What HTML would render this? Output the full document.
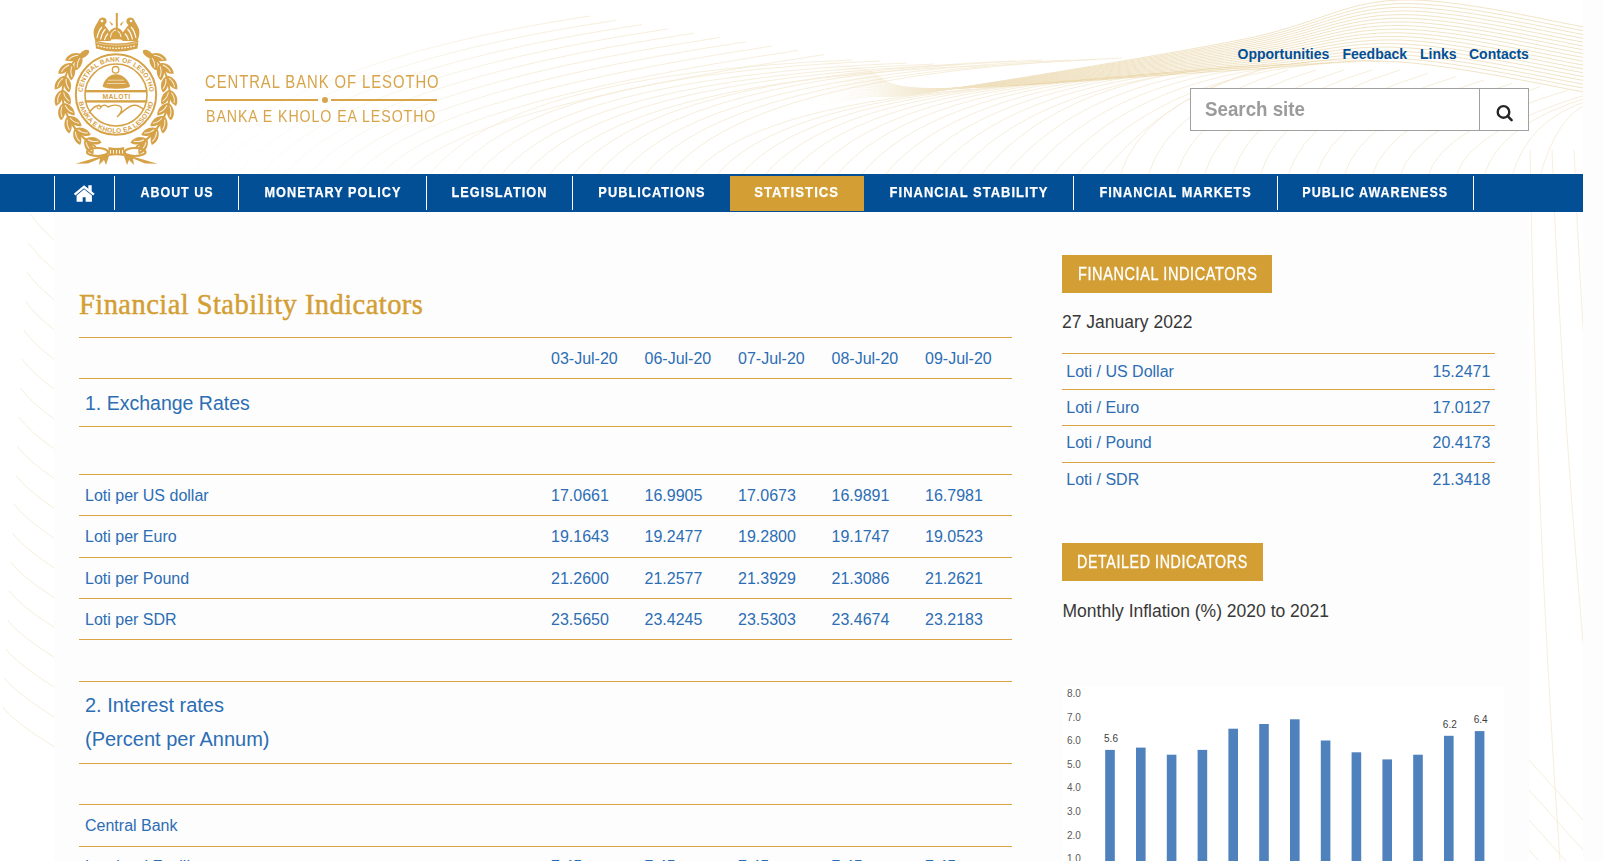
<!DOCTYPE html>
<html><head><meta charset="utf-8">
<style>
*{box-sizing:border-box;margin:0;padding:0}
html,body{width:1603px;height:861px;overflow:hidden;background:#fdfdfd;font-family:"Liberation Sans",sans-serif}
#page{position:absolute;left:0;top:0;width:1583px;height:861px;background:#fff;overflow:hidden}
.abs{position:absolute;white-space:nowrap}
#content{position:absolute;left:54px;top:212px;width:1475px;height:700px;background:#fdfdfd}
#nav{position:absolute;left:0;top:174px;width:1583px;height:38px;background:#034f96}
.sep{position:absolute;top:2px;width:1px;height:34px;background:#fff}
.ni{position:absolute;top:0;height:38px;line-height:36.6px;color:#fff;font-weight:bold;font-size:15px;letter-spacing:1.2px;text-align:center;white-space:nowrap}
.ni span{display:inline-block;transform:scaleX(var(--s,0.85));-webkit-text-stroke:0.25px #fff}
.toplink{position:absolute;top:47px;color:#034f96;font-weight:bold;font-size:14px;line-height:14px;white-space:nowrap}
.ln{position:absolute;left:79px;width:933px;height:1px;background:#d9a441}
.t,.st,.dk{position:absolute;white-space:nowrap;color:#2c6db4;line-height:1}
.st{color:#fff;-webkit-text-stroke:0.35px #fff}
.dk{color:#383838}
</style></head>
<body>
<div id="page">
<svg class="abs" style="left:0;top:0" width="1583" height="861" viewBox="0 0 1583 861">
<defs><linearGradient id="fadeA" gradientUnits="userSpaceOnUse" x1="260" y1="0" x2="560" y2="0"><stop offset="0" stop-color="#fff" stop-opacity="0.25"/><stop offset="1" stop-color="#fff" stop-opacity="1"/></linearGradient><mask id="mA" maskUnits="userSpaceOnUse" x="0" y="0" width="1583" height="861"><rect x="0" y="0" width="1583" height="861" fill="url(#fadeA)"/><rect x="0" y="200" width="1583" height="661" fill="#fff"/></mask></defs>
<g fill="none" stroke="#d8b462" stroke-width="0.8" opacity="0.28" mask="url(#mA)"><path d="M188,176 Q274.7,63.3 590,16.0"/><path d="M212,176 Q294.7,68.5 616,20.3"/><path d="M236,176 Q314.7,73.7 642,24.6"/><path d="M260,176 Q334.7,78.9 668,28.9"/><path d="M284,176 Q354.7,84.1 694,33.2"/><path d="M308,176 Q374.7,89.3 720,37.5"/><path d="M332,176 Q394.7,94.5 746,41.8"/><path d="M356,176 Q414.7,99.7 772,46.1"/><path d="M380,176 Q434.7,104.9 798,50.4"/><path d="M404,176 Q454.7,110.1 824,54.7"/><path d="M428,176 Q506.6,73.8 852,60.0"/><path d="M452,176 Q529.7,75.0 880,61.0"/><path d="M476,176 Q552.0,77.2 907,63.0"/><path d="M500,176 Q575.1,78.4 934,64.0"/><path d="M524,176 Q598.7,79.0 960,64.5"/><path d="M548,176 Q621.8,80.1 987,65.5"/><path d="M572,176 Q649.2,75.6 1015,61.0"/><path d="M596,176 Q673.9,74.7 1042,60.0"/><path d="M620,176 Q697.8,74.9 1070,60.0"/><path d="M644,176 Q722.1,74.5 1096,59.5"/><path d="M668,176 Q747.2,73.0 1122,58.0"/><path d="M692,176 Q745.7,108.8 972,89.2"/><path d="M716,176 Q771.5,106.6 996,87.1"/><path d="M740,176 Q797.3,104.4 1020,85.1"/><path d="M764,176 Q823.1,102.1 1044,83.0"/><path d="M788,176 Q848.9,99.9 1068,80.9"/><path d="M812,176 Q874.7,97.7 1092,78.8"/><path d="M836,176 Q900.5,95.4 1116,76.7"/><path d="M860,176 Q926.2,93.2 1140,74.7"/><path d="M884,176 Q952.0,91.0 1164,72.6"/><path d="M908,176 Q977.8,88.7 1188,70.5"/><path d="M932,176 Q1003.6,86.5 1212,68.4"/><path d="M956,176 Q1029.4,84.3 1236,66.3"/><path d="M980,176 Q1062.8,72.5 1260,65.3"/><path d="M1004,176 Q1087.5,71.6 1284,64.4"/><path d="M1028,176 Q1112.2,70.7 1308,63.5"/><path d="M1052,176 Q1137.0,69.8 1332,62.6"/><path d="M1076,176 Q1161.7,68.9 1356,61.7"/><path d="M1100,176 Q1202.8,47.5 1380,61.3"/><path d="M1120,176 Q1140.0,106.0 1260,70.0"/><path d="M1148,176 Q1168.0,106.0 1288,70.0"/><path d="M1176,176 Q1196.0,106.0 1316,70.0"/><path d="M1204,176 Q1224.0,106.0 1344,70.0"/><path d="M1232,176 Q1252.0,106.0 1372,70.0"/><path d="M1260,176 Q1280.0,106.0 1400,70.0"/><path d="M1288,176 Q1307.0,109.7 1428,73.4"/><path d="M1316,176 Q1333.9,113.4 1456,76.7"/><path d="M1344,176 Q1360.8,117.0 1484,80.1"/><path d="M1372,176 Q1387.8,120.7 1512,83.4"/><path d="M1400,176 Q1414.7,124.4 1540,86.8"/><path d="M1428,176 Q1441.7,128.0 1568,90.2"/><path d="M1456,176 Q1469.2,129.8 1590,93.5"/><path d="M1484,176 Q1498.8,124.2 1590,96.9"/><path d="M1512,176 Q1528.4,118.7 1590,100.2"/><path d="M1540,176 Q1557.9,113.2 1590,103.6"/><path d="M1530,150 Q1536,520 1560,861"/><path d="M1552,150 Q1562,420 1590,720"/><path d="M1574,150 Q1580,300 1592,460"/><path d="M1529,760 L1583,820"/><path d="M1529,790 L1583,850"/><path d="M1529,820 L1583,880"/><path d="M1529,850 L1583,910"/><path d="M30.0,214 Q40.0,228 54,240.0"/><path d="M28.4,243 Q38.4,257 54,269.8"/><path d="M26.8,272 Q36.8,286 54,299.6"/><path d="M25.2,301 Q35.2,315 54,329.4"/><path d="M23.6,330 Q33.6,344 54,359.2"/><path d="M22.0,359 Q32.0,373 54,389.0"/><path d="M20.4,388 Q30.4,402 54,418.8"/><path d="M18.8,417 Q28.8,431 54,448.6"/><path d="M17.2,446 Q27.2,460 54,478.4"/><path d="M15.6,475 Q25.6,489 54,508.2"/><path d="M14.0,504 Q24.0,518 54,538.0"/><path d="M12.4,533 Q22.4,547 54,567.8"/><path d="M10.8,562 Q20.8,576 54,597.6"/><path d="M9.2,591 Q19.2,605 54,627.4"/><path d="M7.6,620 Q17.6,634 54,657.2"/><path d="M6.0,649 Q16.0,663 54,687.0"/><path d="M4.4,678 Q14.4,692 54,716.8"/><path d="M2.8,707 Q12.8,721 54,746.6"/></g>
<defs><linearGradient id="fadeL" gradientUnits="userSpaceOnUse" x1="820" y1="0" x2="960" y2="0"><stop offset="0" stop-color="#fff" stop-opacity="0"/><stop offset="1" stop-color="#fff" stop-opacity="1"/></linearGradient><mask id="mL" maskUnits="userSpaceOnUse" x="0" y="0" width="1583" height="200"><rect x="0" y="0" width="1583" height="200" fill="url(#fadeL)"/></mask></defs>
<g fill="none" stroke="#d8b462" stroke-width="0.9" opacity="0.4" mask="url(#mL)"><path d="M760.0,50.0 C776.7,53.0 830.8,61.6 860.0,68.0 C889.2,74.4 871.7,88.2 935.0,88.5 C998.3,88.8 1162.5,74.4 1240.0,70.0 C1317.5,65.6 1341.7,58.2 1400.0,62.0 C1458.3,65.8 1558.3,87.8 1590.0,93.0"/><path d="M760.0,54.1 C776.7,56.7 830.8,64.0 860.0,69.8 C889.2,75.5 871.7,88.9 935.0,88.7 C998.3,88.4 1162.5,73.3 1240.0,68.2 C1317.5,63.2 1341.7,54.9 1400.0,58.4 C1458.3,61.8 1558.3,84.0 1590.0,89.2"/><path d="M760.0,58.2 C776.7,60.5 830.8,66.4 860.0,71.5 C889.2,76.6 871.7,89.7 935.0,88.9 C998.3,88.0 1162.5,72.2 1240.0,66.5 C1317.5,60.8 1341.7,51.6 1400.0,54.7 C1458.3,57.9 1558.3,80.2 1590.0,85.4"/><path d="M760.0,62.4 C776.7,64.2 830.8,68.8 860.0,73.3 C889.2,77.7 871.7,90.5 935.0,89.0 C998.3,87.6 1162.5,71.0 1240.0,64.7 C1317.5,58.4 1341.7,48.3 1400.0,51.1 C1458.3,53.9 1558.3,76.5 1590.0,81.5"/><path d="M760.0,66.5 C776.7,67.9 830.8,71.3 860.0,75.1 C889.2,78.8 871.7,91.2 935.0,89.2 C998.3,87.2 1162.5,69.9 1240.0,62.9 C1317.5,56.0 1341.7,45.0 1400.0,47.4 C1458.3,49.9 1558.3,72.7 1590.0,77.7"/><path d="M760.0,70.6 C776.7,71.6 830.8,73.7 860.0,76.8 C889.2,80.0 871.7,92.0 935.0,89.4 C998.3,86.8 1162.5,68.8 1240.0,61.2 C1317.5,53.6 1341.7,41.6 1400.0,43.8 C1458.3,45.9 1558.3,68.9 1590.0,73.9"/><path d="M760.0,74.7 C776.7,75.4 830.8,76.1 860.0,78.6 C889.2,81.1 871.7,92.8 935.0,89.6 C998.3,86.4 1162.5,67.7 1240.0,59.4 C1317.5,51.2 1341.7,38.3 1400.0,40.1 C1458.3,41.9 1558.3,65.1 1590.0,70.1"/><path d="M760.0,78.8 C776.7,79.1 830.8,78.5 860.0,80.4 C889.2,82.2 871.7,93.5 935.0,89.7 C998.3,86.0 1162.5,66.5 1240.0,57.6 C1317.5,48.8 1341.7,35.0 1400.0,36.5 C1458.3,37.9 1558.3,61.3 1590.0,66.2"/><path d="M760.0,82.9 C776.7,82.8 830.8,81.0 860.0,82.1 C889.2,83.3 871.7,94.3 935.0,89.9 C998.3,85.5 1162.5,65.4 1240.0,55.9 C1317.5,46.4 1341.7,31.7 1400.0,32.8 C1458.3,33.9 1558.3,57.5 1590.0,62.4"/><path d="M760.0,87.1 C776.7,86.5 830.8,83.4 860.0,83.9 C889.2,84.4 871.7,95.0 935.0,90.1 C998.3,85.1 1162.5,64.3 1240.0,54.1 C1317.5,44.0 1341.7,28.4 1400.0,29.2 C1458.3,29.9 1558.3,53.7 1590.0,58.6"/><path d="M760.0,91.2 C776.7,90.3 830.8,85.8 860.0,85.6 C889.2,85.5 871.7,95.8 935.0,90.3 C998.3,84.7 1162.5,63.1 1240.0,52.4 C1317.5,41.6 1341.7,25.1 1400.0,25.5 C1458.3,25.9 1558.3,49.9 1590.0,54.8"/><path d="M760.0,95.3 C776.7,94.0 830.8,88.2 860.0,87.4 C889.2,86.6 871.7,96.6 935.0,90.4 C998.3,84.3 1162.5,62.0 1240.0,50.6 C1317.5,39.2 1341.7,21.8 1400.0,21.9 C1458.3,21.9 1558.3,46.1 1590.0,50.9"/><path d="M760.0,99.4 C776.7,97.7 830.8,90.6 860.0,89.2 C889.2,87.7 871.7,97.3 935.0,90.6 C998.3,83.9 1162.5,60.9 1240.0,48.8 C1317.5,36.8 1341.7,18.5 1400.0,18.2 C1458.3,18.0 1558.3,42.3 1590.0,47.1"/><path d="M760.0,103.5 C776.7,101.4 830.8,93.1 860.0,90.9 C889.2,88.8 871.7,98.1 935.0,90.8 C998.3,83.5 1162.5,59.8 1240.0,47.1 C1317.5,34.4 1341.7,15.2 1400.0,14.6 C1458.3,14.0 1558.3,38.5 1590.0,43.3"/><path d="M760.0,107.6 C776.7,105.2 830.8,95.5 860.0,92.7 C889.2,89.9 871.7,98.9 935.0,91.0 C998.3,83.1 1162.5,58.6 1240.0,45.3 C1317.5,32.0 1341.7,11.9 1400.0,10.9 C1458.3,10.0 1558.3,34.7 1590.0,39.5"/><path d="M760.0,111.8 C776.7,108.9 830.8,97.9 860.0,94.5 C889.2,91.0 871.7,99.6 935.0,91.1 C998.3,82.7 1162.5,57.5 1240.0,43.5 C1317.5,29.6 1341.7,8.6 1400.0,7.3 C1458.3,6.0 1558.3,30.9 1590.0,35.6"/><path d="M760.0,115.9 C776.7,112.6 830.8,100.3 860.0,96.2 C889.2,92.1 871.7,100.4 935.0,91.3 C998.3,82.2 1162.5,56.4 1240.0,41.8 C1317.5,27.2 1341.7,5.3 1400.0,3.6 C1458.3,2.0 1558.3,27.1 1590.0,31.8"/><path d="M760.0,120.0 C776.7,116.3 830.8,102.8 860.0,98.0 C889.2,93.2 871.7,101.2 935.0,91.5 C998.3,81.8 1162.5,55.2 1240.0,40.0 C1317.5,24.8 1341.7,2.0 1400.0,0.0 C1458.3,-2.0 1558.3,23.3 1590.0,28.0"/></g>
</svg>
<div id="content"></div>
<svg class="abs" style="left:40px;top:0" width="160" height="170" viewBox="40 0 160 170">
<path d="M96,147 C75,135 60.5,111 62.5,90 C64.5,71 74,58 87,52" fill="none" stroke="#d6a248" stroke-width="2"/>
<g transform="translate(93.3,140.8) rotate(-169.2)"><path d="M-8.5,0 C-4,-4.8 4,-4.8 8.5,0 C4,4.8 -4,4.8 -8.5,0 Z" fill="#d6a248"/><path d="M-5,0.8 Q0,-1.8 5.5,0" stroke="#fff" stroke-width="1" fill="none" opacity="0.85"/></g>
<g transform="translate(88.9,147.0) rotate(-121.2)"><path d="M-8.5,0 C-4,-4.8 4,-4.8 8.5,0 C4,4.8 -4,4.8 -8.5,0 Z" fill="#d6a248"/><path d="M-5,0.8 Q0,-1.8 5.5,0" stroke="#fff" stroke-width="1" fill="none" opacity="0.85"/></g>
<g transform="translate(82.9,131.8) rotate(-157.4)"><path d="M-8.5,0 C-4,-4.8 4,-4.8 8.5,0 C4,4.8 -4,4.8 -8.5,0 Z" fill="#d6a248"/><path d="M-5,0.8 Q0,-1.8 5.5,0" stroke="#fff" stroke-width="1" fill="none" opacity="0.85"/></g>
<g transform="translate(77.3,137.0) rotate(-109.4)"><path d="M-8.5,0 C-4,-4.8 4,-4.8 8.5,0 C4,4.8 -4,4.8 -8.5,0 Z" fill="#d6a248"/><path d="M-5,0.8 Q0,-1.8 5.5,0" stroke="#fff" stroke-width="1" fill="none" opacity="0.85"/></g>
<g transform="translate(74.6,121.1) rotate(-145.8)"><path d="M-8.5,0 C-4,-4.8 4,-4.8 8.5,0 C4,4.8 -4,4.8 -8.5,0 Z" fill="#d6a248"/><path d="M-5,0.8 Q0,-1.8 5.5,0" stroke="#fff" stroke-width="1" fill="none" opacity="0.85"/></g>
<g transform="translate(68.1,125.1) rotate(-97.8)"><path d="M-8.5,0 C-4,-4.8 4,-4.8 8.5,0 C4,4.8 -4,4.8 -8.5,0 Z" fill="#d6a248"/><path d="M-5,0.8 Q0,-1.8 5.5,0" stroke="#fff" stroke-width="1" fill="none" opacity="0.85"/></g>
<g transform="translate(68.9,109.3) rotate(-133.4)"><path d="M-8.5,0 C-4,-4.8 4,-4.8 8.5,0 C4,4.8 -4,4.8 -8.5,0 Z" fill="#d6a248"/><path d="M-5,0.8 Q0,-1.8 5.5,0" stroke="#fff" stroke-width="1" fill="none" opacity="0.85"/></g>
<g transform="translate(61.7,111.9) rotate(-85.4)"><path d="M-8.5,0 C-4,-4.8 4,-4.8 8.5,0 C4,4.8 -4,4.8 -8.5,0 Z" fill="#d6a248"/><path d="M-5,0.8 Q0,-1.8 5.5,0" stroke="#fff" stroke-width="1" fill="none" opacity="0.85"/></g>
<g transform="translate(66.3,97.3) rotate(-118.8)"><path d="M-8.5,0 C-4,-4.8 4,-4.8 8.5,0 C4,4.8 -4,4.8 -8.5,0 Z" fill="#d6a248"/><path d="M-5,0.8 Q0,-1.8 5.5,0" stroke="#fff" stroke-width="1" fill="none" opacity="0.85"/></g>
<g transform="translate(58.7,98.0) rotate(-70.8)"><path d="M-8.5,0 C-4,-4.8 4,-4.8 8.5,0 C4,4.8 -4,4.8 -8.5,0 Z" fill="#d6a248"/><path d="M-5,0.8 Q0,-1.8 5.5,0" stroke="#fff" stroke-width="1" fill="none" opacity="0.85"/></g>
<g transform="translate(67.3,84.2) rotate(-102.0)"><path d="M-8.5,0 C-4,-4.8 4,-4.8 8.5,0 C4,4.8 -4,4.8 -8.5,0 Z" fill="#d6a248"/><path d="M-5,0.8 Q0,-1.8 5.5,0" stroke="#fff" stroke-width="1" fill="none" opacity="0.85"/></g>
<g transform="translate(59.8,82.6) rotate(-54.0)"><path d="M-8.5,0 C-4,-4.8 4,-4.8 8.5,0 C4,4.8 -4,4.8 -8.5,0 Z" fill="#d6a248"/><path d="M-5,0.8 Q0,-1.8 5.5,0" stroke="#fff" stroke-width="1" fill="none" opacity="0.85"/></g>
<g transform="translate(71.6,71.9) rotate(-86.3)"><path d="M-8.5,0 C-4,-4.8 4,-4.8 8.5,0 C4,4.8 -4,4.8 -8.5,0 Z" fill="#d6a248"/><path d="M-5,0.8 Q0,-1.8 5.5,0" stroke="#fff" stroke-width="1" fill="none" opacity="0.85"/></g>
<g transform="translate(64.9,68.4) rotate(-38.3)"><path d="M-8.5,0 C-4,-4.8 4,-4.8 8.5,0 C4,4.8 -4,4.8 -8.5,0 Z" fill="#d6a248"/><path d="M-5,0.8 Q0,-1.8 5.5,0" stroke="#fff" stroke-width="1" fill="none" opacity="0.85"/></g>
<g transform="translate(78.4,62.6) rotate(-69.1)"><path d="M-8.5,0 C-4,-4.8 4,-4.8 8.5,0 C4,4.8 -4,4.8 -8.5,0 Z" fill="#d6a248"/><path d="M-5,0.8 Q0,-1.8 5.5,0" stroke="#fff" stroke-width="1" fill="none" opacity="0.85"/></g>
<g transform="translate(73.0,57.2) rotate(-21.1)"><path d="M-8.5,0 C-4,-4.8 4,-4.8 8.5,0 C4,4.8 -4,4.8 -8.5,0 Z" fill="#d6a248"/><path d="M-5,0.8 Q0,-1.8 5.5,0" stroke="#fff" stroke-width="1" fill="none" opacity="0.85"/></g>
<g transform="translate(84,54) rotate(-35)"><ellipse rx="6" ry="3" fill="#d6a248"/></g>
<g transform="translate(232,0) scale(-1,1)"><path d="M96,147 C75,135 60.5,111 62.5,90 C64.5,71 74,58 87,52" fill="none" stroke="#d6a248" stroke-width="2"/>
<g transform="translate(93.3,140.8) rotate(-169.2)"><path d="M-8.5,0 C-4,-4.8 4,-4.8 8.5,0 C4,4.8 -4,4.8 -8.5,0 Z" fill="#d6a248"/><path d="M-5,0.8 Q0,-1.8 5.5,0" stroke="#fff" stroke-width="1" fill="none" opacity="0.85"/></g>
<g transform="translate(88.9,147.0) rotate(-121.2)"><path d="M-8.5,0 C-4,-4.8 4,-4.8 8.5,0 C4,4.8 -4,4.8 -8.5,0 Z" fill="#d6a248"/><path d="M-5,0.8 Q0,-1.8 5.5,0" stroke="#fff" stroke-width="1" fill="none" opacity="0.85"/></g>
<g transform="translate(82.9,131.8) rotate(-157.4)"><path d="M-8.5,0 C-4,-4.8 4,-4.8 8.5,0 C4,4.8 -4,4.8 -8.5,0 Z" fill="#d6a248"/><path d="M-5,0.8 Q0,-1.8 5.5,0" stroke="#fff" stroke-width="1" fill="none" opacity="0.85"/></g>
<g transform="translate(77.3,137.0) rotate(-109.4)"><path d="M-8.5,0 C-4,-4.8 4,-4.8 8.5,0 C4,4.8 -4,4.8 -8.5,0 Z" fill="#d6a248"/><path d="M-5,0.8 Q0,-1.8 5.5,0" stroke="#fff" stroke-width="1" fill="none" opacity="0.85"/></g>
<g transform="translate(74.6,121.1) rotate(-145.8)"><path d="M-8.5,0 C-4,-4.8 4,-4.8 8.5,0 C4,4.8 -4,4.8 -8.5,0 Z" fill="#d6a248"/><path d="M-5,0.8 Q0,-1.8 5.5,0" stroke="#fff" stroke-width="1" fill="none" opacity="0.85"/></g>
<g transform="translate(68.1,125.1) rotate(-97.8)"><path d="M-8.5,0 C-4,-4.8 4,-4.8 8.5,0 C4,4.8 -4,4.8 -8.5,0 Z" fill="#d6a248"/><path d="M-5,0.8 Q0,-1.8 5.5,0" stroke="#fff" stroke-width="1" fill="none" opacity="0.85"/></g>
<g transform="translate(68.9,109.3) rotate(-133.4)"><path d="M-8.5,0 C-4,-4.8 4,-4.8 8.5,0 C4,4.8 -4,4.8 -8.5,0 Z" fill="#d6a248"/><path d="M-5,0.8 Q0,-1.8 5.5,0" stroke="#fff" stroke-width="1" fill="none" opacity="0.85"/></g>
<g transform="translate(61.7,111.9) rotate(-85.4)"><path d="M-8.5,0 C-4,-4.8 4,-4.8 8.5,0 C4,4.8 -4,4.8 -8.5,0 Z" fill="#d6a248"/><path d="M-5,0.8 Q0,-1.8 5.5,0" stroke="#fff" stroke-width="1" fill="none" opacity="0.85"/></g>
<g transform="translate(66.3,97.3) rotate(-118.8)"><path d="M-8.5,0 C-4,-4.8 4,-4.8 8.5,0 C4,4.8 -4,4.8 -8.5,0 Z" fill="#d6a248"/><path d="M-5,0.8 Q0,-1.8 5.5,0" stroke="#fff" stroke-width="1" fill="none" opacity="0.85"/></g>
<g transform="translate(58.7,98.0) rotate(-70.8)"><path d="M-8.5,0 C-4,-4.8 4,-4.8 8.5,0 C4,4.8 -4,4.8 -8.5,0 Z" fill="#d6a248"/><path d="M-5,0.8 Q0,-1.8 5.5,0" stroke="#fff" stroke-width="1" fill="none" opacity="0.85"/></g>
<g transform="translate(67.3,84.2) rotate(-102.0)"><path d="M-8.5,0 C-4,-4.8 4,-4.8 8.5,0 C4,4.8 -4,4.8 -8.5,0 Z" fill="#d6a248"/><path d="M-5,0.8 Q0,-1.8 5.5,0" stroke="#fff" stroke-width="1" fill="none" opacity="0.85"/></g>
<g transform="translate(59.8,82.6) rotate(-54.0)"><path d="M-8.5,0 C-4,-4.8 4,-4.8 8.5,0 C4,4.8 -4,4.8 -8.5,0 Z" fill="#d6a248"/><path d="M-5,0.8 Q0,-1.8 5.5,0" stroke="#fff" stroke-width="1" fill="none" opacity="0.85"/></g>
<g transform="translate(71.6,71.9) rotate(-86.3)"><path d="M-8.5,0 C-4,-4.8 4,-4.8 8.5,0 C4,4.8 -4,4.8 -8.5,0 Z" fill="#d6a248"/><path d="M-5,0.8 Q0,-1.8 5.5,0" stroke="#fff" stroke-width="1" fill="none" opacity="0.85"/></g>
<g transform="translate(64.9,68.4) rotate(-38.3)"><path d="M-8.5,0 C-4,-4.8 4,-4.8 8.5,0 C4,4.8 -4,4.8 -8.5,0 Z" fill="#d6a248"/><path d="M-5,0.8 Q0,-1.8 5.5,0" stroke="#fff" stroke-width="1" fill="none" opacity="0.85"/></g>
<g transform="translate(78.4,62.6) rotate(-69.1)"><path d="M-8.5,0 C-4,-4.8 4,-4.8 8.5,0 C4,4.8 -4,4.8 -8.5,0 Z" fill="#d6a248"/><path d="M-5,0.8 Q0,-1.8 5.5,0" stroke="#fff" stroke-width="1" fill="none" opacity="0.85"/></g>
<g transform="translate(73.0,57.2) rotate(-21.1)"><path d="M-8.5,0 C-4,-4.8 4,-4.8 8.5,0 C4,4.8 -4,4.8 -8.5,0 Z" fill="#d6a248"/><path d="M-5,0.8 Q0,-1.8 5.5,0" stroke="#fff" stroke-width="1" fill="none" opacity="0.85"/></g>
<g transform="translate(84,54) rotate(-35)"><ellipse rx="6" ry="3" fill="#d6a248"/></g></g>
<path d="M108.5,147 Q116.3,149 124.2,147 L124.2,156 Q116.3,154.5 108.5,156 Z" fill="#d6a248"/>
<path d="M110.5,150 L110.5,153.5 M113.5,150 L113.5,153.5 M116.5,150 L116.5,153.5 M119.5,150 L119.5,153.5 M122.5,150 L122.5,153.5" stroke="#fff" stroke-width="0.9"/>
<ellipse cx="97.5" cy="152" rx="10.5" ry="4" fill="none" stroke="#d6a248" stroke-width="2.2"/>
<ellipse cx="135" cy="152" rx="10.5" ry="4" fill="none" stroke="#d6a248" stroke-width="2.2"/>
<path d="M108.5,154 L75.5,163.8 L88,163.5 L100,158.5 L99,165 L104,160 L106,165 L109,156 Z" fill="#d6a248"/>
<path d="M124.2,154 L157.5,163.8 L145,163.5 L133,158.5 L134,165 L129,160 L127,165 L124,156 Z" fill="#d6a248"/>
<circle cx="116" cy="94.5" r="40.2" fill="#fff" stroke="#d6a248" stroke-width="2"/>
<circle cx="116" cy="95" r="31" fill="none" stroke="#d6a248" stroke-width="1.6"/>
<defs><path id="arcT" d="M82.5,95 A33.5,33.5 0 0 1 149.5,95"/><path id="arcB" d="M78,95 A38,38 0 0 0 154,95"/></defs>
<text font-family="Liberation Sans" font-size="6.6" font-weight="bold" fill="#d6a248" letter-spacing="0.1"><textPath href="#arcT" startOffset="50%" text-anchor="middle">CENTRAL BANK OF LESOTHO</textPath></text>
<text font-family="Liberation Sans" font-size="6.6" font-weight="bold" fill="#d6a248" letter-spacing="0.2"><textPath href="#arcB" startOffset="50%" text-anchor="middle">BANKA E KHOLO EA LESOTHO</textPath></text>
<rect x="84.8" y="90" width="62.5" height="2.4" fill="#d6a248"/>
<rect x="84.8" y="100.2" width="62.5" height="2.4" fill="#d6a248"/>
<text x="116.5" y="99.3" font-family="Liberation Sans" font-size="6.8" font-weight="bold" fill="#d6a248" text-anchor="middle" letter-spacing="0.3">MALOTI</text>
<circle cx="115.6" cy="69.8" r="3.3" fill="none" stroke="#d6a248" stroke-width="1.3"/>
<path d="M102.6,86.5 C104,80 109,74.3 116,74.3 C123,74.3 128.5,80 130.1,86.5 C127,89.5 106,89.5 102.6,86.5 Z" fill="#d6a248"/>
<path d="M108,80.2 L124,80.2 M107,83.5 L125.5,83.5" stroke="#fff" stroke-width="0.7" opacity="0.8"/>
<path d="M89,113 C94,106 98,104 101,107 C103,104 106,105 108,107 C112,105 118,104 121,107 C123,110 120,114 117,117 C122,112 126,108 131,106 C136,104 140,106 144,110" fill="none" stroke="#d6a248" stroke-width="1.4"/>
<circle cx="99" cy="107" r="2" fill="none" stroke="#d6a248" stroke-width="1"/>
<path d="M95,40.5 Q116,46.5 138.5,40.5 L137.5,48.5 Q116,55 96,48.5 Z" fill="#d6a248"/>
<path d="M97.5,45.6 Q116,51 136,45.6" stroke="#fff" stroke-width="1.3" fill="none" stroke-dasharray="1.8 1.2" opacity="0.9"/>
<path d="M96,42.5 Q116,48.2 137.5,42.5" stroke="#fff" stroke-width="0.6" fill="none" opacity="0.7"/>
<path d="M95.5,41 C93.5,36 93,31 94.5,28 C95.5,25 97.5,23 98.5,20.5 C99.5,17.5 103,16.5 105.5,18.5 C107.5,20.5 106.5,24 104.5,25 C106.5,27 108.5,30 110.5,33 C111.5,36 111.5,39 110.5,41 Z" fill="#d6a248"/><path d="M97,38 C98,33 100,29 102,27 M100.5,39.5 C101.5,35 103.5,31 105.5,29 M104.5,40 C105.5,36.5 107,34.5 108,33.5" stroke="#fff" stroke-width="1.1" fill="none"/><circle cx="102" cy="21" r="1.3" fill="#fff"/>
<g transform="translate(233,0) scale(-1,1)"><path d="M95.5,41 C93.5,36 93,31 94.5,28 C95.5,25 97.5,23 98.5,20.5 C99.5,17.5 103,16.5 105.5,18.5 C107.5,20.5 106.5,24 104.5,25 C106.5,27 108.5,30 110.5,33 C111.5,36 111.5,39 110.5,41 Z" fill="#d6a248"/><path d="M97,38 C98,33 100,29 102,27 M100.5,39.5 C101.5,35 103.5,31 105.5,29 M104.5,40 C105.5,36.5 107,34.5 108,33.5" stroke="#fff" stroke-width="1.1" fill="none"/><circle cx="102" cy="21" r="1.3" fill="#fff"/></g>
<path d="M107.5,40.5 C107.5,33 110.5,28 116,27.5 C121.5,28 124.5,33 124.5,40.5 Q116,38 107.5,40.5 Z" fill="#d6a248"/>
<path d="M110.5,37.5 C111,33 113,30.5 116,30 M121,37 C120.5,34 119.5,32 117.5,31" stroke="#fff" stroke-width="1" fill="none"/>
<rect x="115.8" y="13" width="2" height="15" fill="#d6a248"/>
<path d="M109,21 L113,24 L112,26 Z M124,21 L120,24 L121,26 Z" fill="#d6a248"/>
</svg>
<div class="abs" style="left:205px;top:72px;font-size:19.2px;line-height:19px;letter-spacing:1.2px;color:#d7a44a;transform:scaleX(0.774);transform-origin:0 0">CENTRAL BANK OF LESOTHO</div>
<div class="abs" style="left:205px;top:98.6px;width:113px;height:2px;background:#d7a44a"></div>
<div class="abs" style="left:331px;top:98.6px;width:106px;height:2px;background:#d7a44a"></div>
<div class="abs" style="left:321.5px;top:96.6px;width:6px;height:6px;border-radius:50%;background:#d7a44a"></div>
<div class="abs" style="left:206px;top:108px;font-size:17px;line-height:17px;letter-spacing:1.1px;color:#d7a44a;transform:scaleX(0.835);transform-origin:0 0">BANKA E KHOLO EA LESOTHO</div>

<div class="toplink" style="left:1237.5px">Opportunities</div>
<div class="toplink" style="left:1342.5px">Feedback</div>
<div class="toplink" style="left:1420px">Links</div>
<div class="toplink" style="left:1469px">Contacts</div>

<div class="abs" style="left:1190px;top:88px;width:339px;height:43px;border:1px solid #a0a0a0;background:#fff"></div>
<div class="abs" style="left:1479px;top:88px;width:1px;height:43px;background:#a0a0a0"></div>
<div class="abs" style="left:1204.5px;top:98.5px;font-size:20.5px;line-height:20.5px;font-weight:bold;color:#9b9b9b;transform:scaleX(0.914);transform-origin:0 0">Search site</div>
<svg class="abs" style="left:1494px;top:103px" width="20" height="20" viewBox="0 0 20 20"><circle cx="9.5" cy="8.9" r="5.8" fill="none" stroke="#262626" stroke-width="2.4"/><path d="M13.7 13.1 L17.6 17.1" stroke="#262626" stroke-width="2.6" stroke-linecap="round"/></svg>

<div id="nav">
<div class="sep" style="left:54px"></div>
<div class="sep" style="left:114px"></div>
<div class="sep" style="left:238px"></div>
<div class="sep" style="left:426px"></div>
<div class="sep" style="left:572px"></div>
<div class="abs" style="left:730px;top:2px;width:134px;height:35px;background:#d39e33"></div>
<div class="sep" style="left:1073px"></div>
<div class="sep" style="left:1277px"></div>
<div class="sep" style="left:1473px"></div>
<div class="ni" style="left:115px;width:123px;--s:0.83"><span>ABOUT US</span></div>
<div class="ni" style="left:239px;width:187px;--s:0.845"><span>MONETARY POLICY</span></div>
<div class="ni" style="left:427px;width:145px;--s:0.848"><span>LEGISLATION</span></div>
<div class="ni" style="left:573px;width:157px;--s:0.851"><span>PUBLICATIONS</span></div>
<div class="ni" style="left:730px;width:134px;--s:0.874"><span>STATISTICS</span></div>
<div class="ni" style="left:864px;width:209px;--s:0.863"><span>FINANCIAL STABILITY</span></div>
<div class="ni" style="left:1074px;width:203px;--s:0.85"><span>FINANCIAL MARKETS</span></div>
<div class="ni" style="left:1278px;width:195px;--s:0.836"><span>PUBLIC AWARENESS</span></div>
</div>
<svg class="abs" style="left:64px;top:176px" width="40" height="32" viewBox="64 176 40 32"><path d="M88.3,185.3 L91.7,185.3 L91.7,192 L88.3,189.5 Z" fill="#fff"/><path d="M74.6,194.6 L84.1,186.7 L93.9,194.6" fill="none" stroke="#fff" stroke-width="2.4"/><path d="M76.6,195.4 L84.1,189.3 L91.9,195.4 L91.9,201.8 L85.6,201.8 L85.6,197.2 L82.7,197.2 L82.7,201.8 L76.6,201.8 Z" fill="#fff"/></svg>

<div class="abs" style="left:79px;top:291px;font-family:'Liberation Serif',serif;font-size:28.5px;line-height:28.5px;letter-spacing:0.45px;color:#d39e33;-webkit-text-stroke:0.45px #d39e33">Financial Stability Indicators</div>
<div class="ln" style="top:337px"></div>
<div class="ln" style="top:378px"></div>
<div class="ln" style="top:426px"></div>
<div class="ln" style="top:474px"></div>
<div class="ln" style="top:515px"></div>
<div class="ln" style="top:557px"></div>
<div class="ln" style="top:598px"></div>
<div class="ln" style="top:639px"></div>
<div class="ln" style="top:681px"></div>
<div class="ln" style="top:763px"></div>
<div class="ln" style="top:804px"></div>
<div class="ln" style="top:846px"></div>
<div class="ln" style="top:887px"></div>
<div class="t" style="left:551px;top:350.66px;font-size:16px;">03-Jul-20</div>
<div class="t" style="left:644.5px;top:350.66px;font-size:16px;">06-Jul-20</div>
<div class="t" style="left:738px;top:350.66px;font-size:16px;">07-Jul-20</div>
<div class="t" style="left:831.5px;top:350.66px;font-size:16px;">08-Jul-20</div>
<div class="t" style="left:925px;top:350.66px;font-size:16px;">09-Jul-20</div>
<div class="t" style="left:85px;top:394.09px;font-size:19.5px;">1. Exchange Rates</div>
<div class="t" style="left:85px;top:488.46px;font-size:16px;">Loti per US dollar</div>
<div class="t" style="left:551px;top:488.46px;font-size:16px;">17.0661</div>
<div class="t" style="left:644.5px;top:488.46px;font-size:16px;">16.9905</div>
<div class="t" style="left:738px;top:488.46px;font-size:16px;">17.0673</div>
<div class="t" style="left:831.5px;top:488.46px;font-size:16px;">16.9891</div>
<div class="t" style="left:925px;top:488.46px;font-size:16px;">16.7981</div>
<div class="t" style="left:85px;top:529.46px;font-size:16px;">Loti per Euro</div>
<div class="t" style="left:551px;top:529.46px;font-size:16px;">19.1643</div>
<div class="t" style="left:644.5px;top:529.46px;font-size:16px;">19.2477</div>
<div class="t" style="left:738px;top:529.46px;font-size:16px;">19.2800</div>
<div class="t" style="left:831.5px;top:529.46px;font-size:16px;">19.1747</div>
<div class="t" style="left:925px;top:529.46px;font-size:16px;">19.0523</div>
<div class="t" style="left:85px;top:571.46px;font-size:16px;">Loti per Pound</div>
<div class="t" style="left:551px;top:571.46px;font-size:16px;">21.2600</div>
<div class="t" style="left:644.5px;top:571.46px;font-size:16px;">21.2577</div>
<div class="t" style="left:738px;top:571.46px;font-size:16px;">21.3929</div>
<div class="t" style="left:831.5px;top:571.46px;font-size:16px;">21.3086</div>
<div class="t" style="left:925px;top:571.46px;font-size:16px;">21.2621</div>
<div class="t" style="left:85px;top:612.46px;font-size:16px;">Loti per SDR</div>
<div class="t" style="left:551px;top:612.46px;font-size:16px;">23.5650</div>
<div class="t" style="left:644.5px;top:612.46px;font-size:16px;">23.4245</div>
<div class="t" style="left:738px;top:612.46px;font-size:16px;">23.5303</div>
<div class="t" style="left:831.5px;top:612.46px;font-size:16px;">23.4674</div>
<div class="t" style="left:925px;top:612.46px;font-size:16px;">23.2183</div>
<div class="t" style="left:85px;top:694.87px;font-size:20px;">2. Interest rates</div>
<div class="t" style="left:85px;top:729.07px;font-size:20px;">(Percent per Annum)</div>
<div class="t" style="left:85px;top:818.46px;font-size:16px;">Central Bank</div>
<div class="t" style="left:85px;top:859.46px;font-size:16px;">Lombard Facility</div>
<div class="t" style="left:551px;top:859.46px;font-size:16px;">7.45</div>
<div class="t" style="left:644.5px;top:859.46px;font-size:16px;">7.45</div>
<div class="t" style="left:738px;top:859.46px;font-size:16px;">7.45</div>
<div class="t" style="left:831.5px;top:859.46px;font-size:16px;">7.45</div>
<div class="t" style="left:925px;top:859.46px;font-size:16px;">7.45</div>
<div class="abs" style="left:1062px;top:255px;width:210px;height:38px;background:#d39e33"></div>
<div class="st" style="left:1077.5px;top:264.64px;font-size:18.5px;letter-spacing:0.8px;transform:scaleX(0.782);transform-origin:0 0">FINANCIAL INDICATORS</div>
<div class="dk" style="left:1062px;top:314.19px;font-size:17.5px;">27 January 2022</div>
<div class="abs" style="left:1062px;top:353px;width:433px;height:1px;background:#d9a441"></div>
<div class="abs" style="left:1062px;top:389px;width:433px;height:1px;background:#d9a441"></div>
<div class="abs" style="left:1062px;top:425px;width:433px;height:1px;background:#d9a441"></div>
<div class="abs" style="left:1062px;top:462px;width:433px;height:1px;background:#d9a441"></div>
<div class="t" style="left:1066.3px;top:363.66px;font-size:16px;">Loti / US Dollar</div>
<div class="t" style="left:1432.5px;top:363.66px;font-size:16px;">15.2471</div>
<div class="t" style="left:1066.3px;top:399.56px;font-size:16px;">Loti / Euro</div>
<div class="t" style="left:1432.5px;top:399.56px;font-size:16px;">17.0127</div>
<div class="t" style="left:1066.3px;top:435.16px;font-size:16px;">Loti / Pound</div>
<div class="t" style="left:1432.5px;top:435.16px;font-size:16px;">20.4173</div>
<div class="t" style="left:1066.3px;top:472.16px;font-size:16px;">Loti / SDR</div>
<div class="t" style="left:1432.5px;top:472.16px;font-size:16px;">21.3418</div>
<div class="abs" style="left:1062px;top:543px;width:201px;height:38px;background:#d39e33"></div>
<div class="st" style="left:1077.3px;top:552.54px;font-size:18.5px;letter-spacing:0.8px;transform:scaleX(0.770);transform-origin:0 0">DETAILED INDICATORS</div>
<div class="dk" style="left:1062.5px;top:602.79px;font-size:17.5px;">Monthly Inflation (%) 2020 to 2021</div>
<svg class="abs" style="left:1062px;top:686px" width="442" height="200" viewBox="0 0 442 200">
<rect width="442" height="200" fill="#fff"/>
<text x="5" y="10.9" font-size="10" fill="#595959" font-family="Liberation Sans">8.0</text>
<text x="5" y="34.5" font-size="10" fill="#595959" font-family="Liberation Sans">7.0</text>
<text x="5" y="58.1" font-size="10" fill="#595959" font-family="Liberation Sans">6.0</text>
<text x="5" y="81.7" font-size="10" fill="#595959" font-family="Liberation Sans">5.0</text>
<text x="5" y="105.3" font-size="10" fill="#595959" font-family="Liberation Sans">4.0</text>
<text x="5" y="128.9" font-size="10" fill="#595959" font-family="Liberation Sans">3.0</text>
<text x="5" y="152.5" font-size="10" fill="#595959" font-family="Liberation Sans">2.0</text>
<text x="5" y="176.1" font-size="10" fill="#595959" font-family="Liberation Sans">1.0</text>
<text x="5" y="199.7" font-size="10" fill="#595959" font-family="Liberation Sans">0.0</text>
<rect x="43.2" y="63.9" width="9.6" height="136.1" fill="#4f81bd"/>
<rect x="74.0" y="61.6" width="9.6" height="138.4" fill="#4f81bd"/>
<rect x="104.8" y="68.7" width="9.6" height="131.3" fill="#4f81bd"/>
<rect x="135.6" y="63.9" width="9.6" height="136.1" fill="#4f81bd"/>
<rect x="166.4" y="42.7" width="9.6" height="157.3" fill="#4f81bd"/>
<rect x="197.2" y="38.0" width="9.6" height="162.0" fill="#4f81bd"/>
<rect x="228.0" y="33.3" width="9.6" height="166.7" fill="#4f81bd"/>
<rect x="258.8" y="54.5" width="9.6" height="145.5" fill="#4f81bd"/>
<rect x="289.6" y="66.3" width="9.6" height="133.7" fill="#4f81bd"/>
<rect x="320.4" y="73.4" width="9.6" height="126.6" fill="#4f81bd"/>
<rect x="351.2" y="68.7" width="9.6" height="131.3" fill="#4f81bd"/>
<rect x="382.0" y="49.8" width="9.6" height="150.2" fill="#4f81bd"/>
<rect x="412.8" y="45.1" width="9.6" height="154.9" fill="#4f81bd"/>
<text x="49.0" y="55.9" font-size="10" fill="#404040" text-anchor="middle" font-family="Liberation Sans">5.6</text>
<text x="387.8" y="41.8" font-size="10" fill="#404040" text-anchor="middle" font-family="Liberation Sans">6.2</text>
<text x="418.6" y="37.1" font-size="10" fill="#404040" text-anchor="middle" font-family="Liberation Sans">6.4</text>
</svg>
</div>
</body></html>
